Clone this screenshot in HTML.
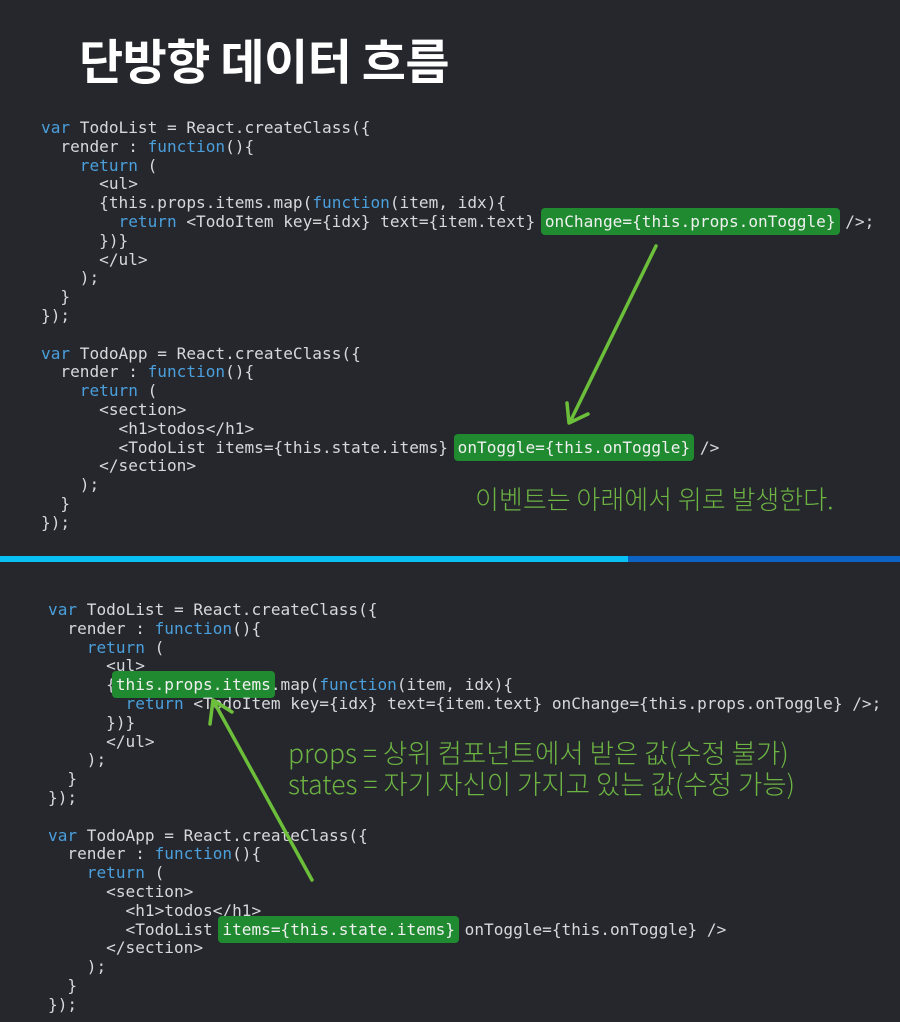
<!DOCTYPE html>
<html><head><meta charset="utf-8"><style>
body{margin:0;width:900px;height:1022px;background:#25272c;position:relative;overflow:hidden;font-family:"Liberation Sans","Noto Sans CJK KR",sans-serif}
.t{position:absolute;left:79px;top:23px;color:#fff;font-size:48px;font-weight:bold;font-family:"Noto Sans CJK KR",sans-serif;letter-spacing:-0.5px}
pre{position:absolute;margin:0;font-family:"DejaVu Sans Mono","Liberation Mono",monospace;font-size:16.1px;line-height:18.8px;color:#d6d8dc}
.k{color:#4a9fdc}
.h{background:#1f8a30;border-radius:4px;padding:4px 4px;margin:0 -4px;color:#f0f0f0}
.kr{position:absolute;color:#6db443;font-family:"Noto Sans CJK KR",sans-serif;font-weight:300;font-size:26px;letter-spacing:0;line-height:31px}
.bar1{position:absolute;left:0;top:556px;width:628px;height:6px;background:#08c0f4}
.bar2{position:absolute;left:628px;top:556px;width:272px;height:6px;background:#0d63c4}
</style></head><body>
<div class="t">단방향 데이터 흐름</div>
<pre style="left:41px;top:119px"><span class="k">var</span> TodoList = React.createClass({
  render : <span class="k">function</span>(){
    <span class="k">return</span> (
      &lt;ul&gt;
      {this.props.items.map(<span class="k">function</span>(item, idx){
        <span class="k">return</span> &lt;TodoItem key={idx} text={item.text} <span class="h">onChange={this.props.onToggle}</span> /&gt;;
      })}
      &lt;/ul&gt;
    );
  }
});

<span class="k">var</span> TodoApp = React.createClass({
  render : <span class="k">function</span>(){
    <span class="k">return</span> (
      &lt;section&gt;
        &lt;h1&gt;todos&lt;/h1&gt;
        &lt;TodoList items={this.state.items} <span class="h">onToggle={this.onToggle}</span> /&gt;
      &lt;/section&gt;
    );
  }
});</pre>
<div class="kr" style="left:475px;top:483px">이벤트는 아래에서 위로 발생한다.</div>
<div class="bar1"></div><div class="bar2"></div>
<pre style="left:48px;top:601px"><span class="k">var</span> TodoList = React.createClass({
  render : <span class="k">function</span>(){
    <span class="k">return</span> (
      &lt;ul&gt;
      {<span class="h">this.props.items</span>.map(<span class="k">function</span>(item, idx){
        <span class="k">return</span> &lt;TodoItem key={idx} text={item.text} onChange={this.props.onToggle} /&gt;;
      })}
      &lt;/ul&gt;
    );
  }
});

<span class="k">var</span> TodoApp = React.createClass({
  render : <span class="k">function</span>(){
    <span class="k">return</span> (
      &lt;section&gt;
        &lt;h1&gt;todos&lt;/h1&gt;
        &lt;TodoList <span class="h">items={this.state.items}</span> onToggle={this.onToggle} /&gt;
      &lt;/section&gt;
    );
  }
});</pre>
<div class="kr" style="left:288px;top:736px;font-size:26.5px">props = 상위 컴포넌트에서 받은 값(수정 불가)<br>states = 자기 자신이 가지고 있는 값(수정 가능)</div>
<svg width="900" height="1022" style="position:absolute;left:0;top:0" fill="none" stroke="#6cbf3a" stroke-width="3.5" stroke-linecap="round" stroke-linejoin="round">
<path d="M656 246 L570 422"/><path d="M567 403 L569 423 L588 414"/>
<path d="M312 880 L214 702"/><path d="M210 724 L213 700 L232 712"/>
</svg>
</body></html>
